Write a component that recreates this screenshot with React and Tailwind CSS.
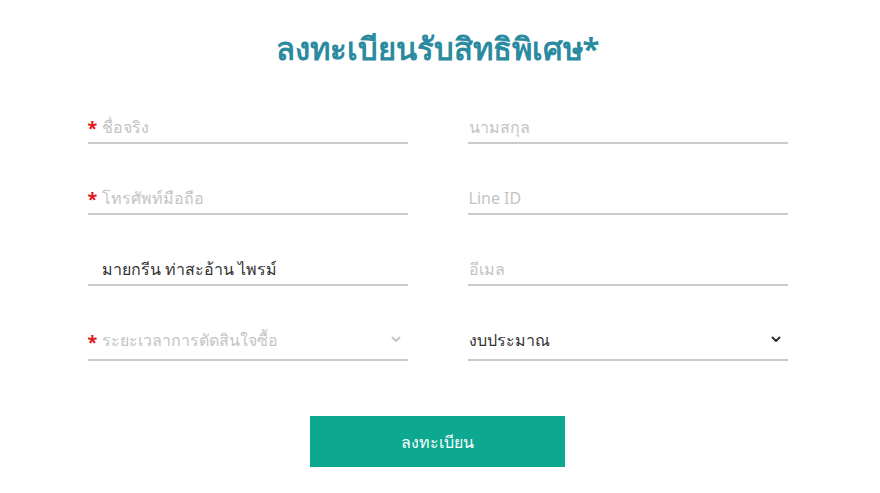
import React from "react";

function Asterisk({ top }) {
	return (
		<span
			className={
				"absolute left-0 bottom-0 flex items-center text-[#e3161b] text-[18px] font-bold leading-none " +
				top
			}
		>
			*
		</span>
	);
}

function Chevron({ color }) {
	return (
		<svg
			className="absolute right-[7px] top-[15px]"
			width="10"
			height="7"
			viewBox="0 0 10 7"
			fill="none"
		>
			<path d="M1.5 1.5 L5 5 L8.5 1.5" stroke={color} strokeWidth="2" strokeLinecap="round" strokeLinejoin="round" />
		</svg>
	);
}

function Field({ label, value, required, chevron, chevronColor, extra, select }) {
	return (
		<div
			className={
				"relative border-b-2 border-[#cccccc] flex items-center text-[16px] " +
				(select ? "h-[40px] " : "h-[36px] pt-[4px] ") +
				(extra || "")
			}
		>
			{required && <Asterisk top={select ? "top-[4px]" : "top-[6px]"} />}
			{value ? (
				<span className="text-[#333333]">{value}</span>
			) : (
				<span className="text-[#c4c4c4]">{label}</span>
			)}
			{chevron && <Chevron color={chevronColor} />}
		</div>
	);
}

export default function App() {
	return (
		<div className="w-[875px] h-[493px] bg-white font-['Noto_Sans',sans-serif]">
			<h1 className="pt-[28px] h-[68px] leading-[40px] text-center text-[31px] font-bold text-[#2a8a9f]">
				ลงทะเบียนรับสิทธิพิเศษ*
			</h1>
			<div className="mx-auto mt-[40px] w-[700px] grid grid-cols-2 gap-x-[60px] gap-y-[35px]">
				<Field label="ชื่อจริง" required extra="pl-[14px]" />
				<Field label="นามสกุล" extra="pl-[1px]" />
				<Field label="โทรศัพท์มือถือ" required extra="pl-[14px]" />
				<Field label="Line ID" extra="pl-[1px]" />
				<Field value="มายกรีน ท่าสะอ้าน ไพรม์" extra="pl-[14px]" />
				<Field label="อีเมล" extra="pl-[1px]" />
				<Field
					label="ระยะเวลาการตัดสินใจซื้อ"
					required
					select
					chevron
					chevronColor="#c8c8c8"
					extra="pl-[14px]"
				/>
				<Field
					value="งบประมาณ"
					select
					chevron
					chevronColor="#333333"
					extra="pl-[1px]"
				/>
			</div>
			<div className="flex justify-center mt-[55px]">
				<button
					type="button"
					className="w-[255px] h-[51px] bg-[#0ca88f] text-white text-[16px] font-medium"
				>
					ลงทะเบียน
				</button>
			</div>
		</div>
	);
}
